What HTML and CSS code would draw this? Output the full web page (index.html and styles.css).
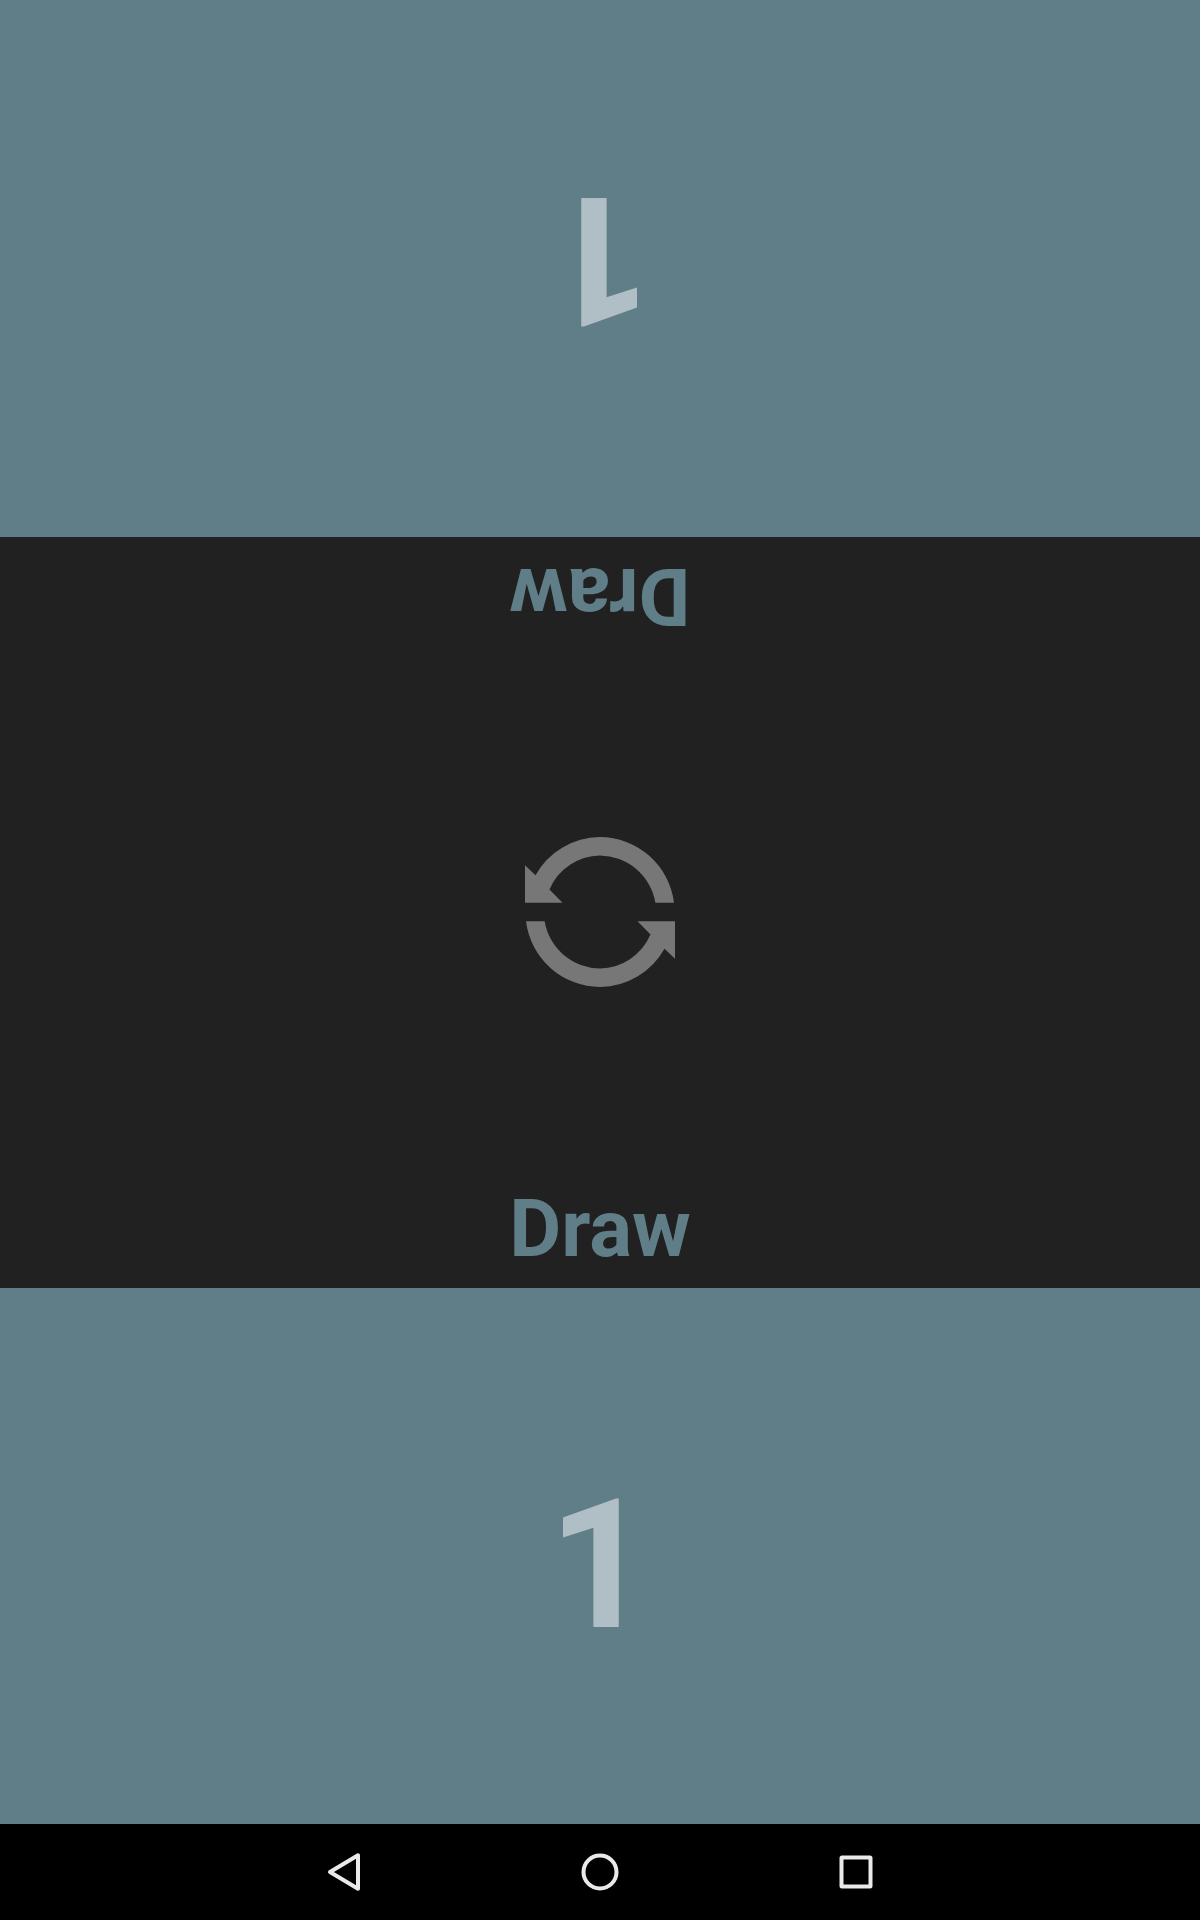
FILE: index.html
```html
<!DOCTYPE html>
<html lang="en">
<head>
<meta charset="utf-8">
<title>Draw</title>
<link rel="stylesheet" href="styles.css">
</head>
<body>
<main class="screen">
  <section class="player flipped"><span class="score">1</span></section>
  <section class="board">
    <div class="result flipped">Draw</div>
    <svg class="restart" viewBox="0 0 150 150" role="img" aria-label="Restart">
      <g id="half"><path d="M0 28.200L10.500 38.200A74.700 74.700 0 0 1 74.800 0A75 75 0 0 1 149 65.700H130.400A56.500 56.500 0 0 0 74.800 18.600A56 56 0 0 0 24.500 52.400L37.500 65.700H0Z"/></g>
      <use href="#half" transform="rotate(180 75 75)"/>
    </svg>
    <div class="result">Draw</div>
  </section>
  <section class="player"><span class="score">1</span></section>
  <nav class="navbar">
    <svg viewBox="0 0 96 96"><path d="M62 31.300V64.700L34 48Z"/></svg>
    <svg viewBox="0 0 96 96"><circle cx="48" cy="48" r="16.500"/></svg>
    <svg viewBox="0 0 96 96"><rect x="33.500" y="33.500" width="29" height="29" rx=".5"/></svg>
  </nav>
</main>
</body>
</html>
```
FILE: styles.css
```css
body { margin: 0; font-family: Roboto, "Liberation Sans", sans-serif; }
.screen { width: 1200px; height: 1920px; display: grid; grid-template-rows: 537px 751px 536px 96px; background: #212121; }
.player { box-sizing: border-box; padding-top: 18px; background: #607e88; display: flex; align-items: center; justify-content: center; }
.flipped { transform: rotate(180deg); }
.score { font-size: 180px; line-height: 211px; font-weight: 700; color: #b0bec5; }
.board { display: flex; flex-direction: column; align-items: center; justify-content: space-between; padding: 12px 0; }
.result { font-size: 80px; line-height: 94px; font-weight: 700; color: #607e88; }
.restart { width: 150px; height: 150px; margin-bottom: 1px; fill: #777; }
.navbar { background: #000; display: flex; justify-content: center; gap: 160px; }
.navbar svg { width: 96px; height: 96px; fill: none; stroke: #eaeaea; stroke-width: 4; stroke-linejoin: round; }
```
